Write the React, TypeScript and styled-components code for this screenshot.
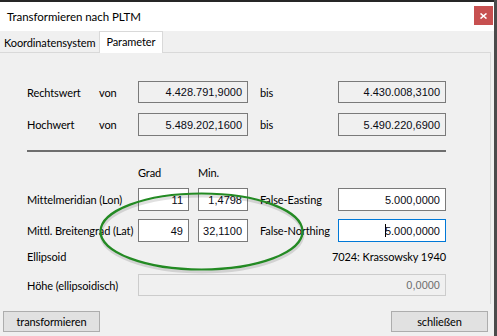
import React from 'react';
import styled, { createGlobalStyle } from 'styled-components';

const GlobalStyle = createGlobalStyle`
  html, body {
    margin: 0;
    padding: 0;
    background: #f0f0f0;
  }
  * {
    box-sizing: border-box;
  }
`;

const UI_FONT = `Lato, 'Noto Sans', sans-serif`;
const FIELD_FONT = `'Liberation Sans', Arial, sans-serif`;
const COLS = '72px 39px 51px 9px 50px 12px 78px 108px';

// Layout
const Screen = styled.div`
  display: flex;
  width: 497px;
  height: 336px;
  overflow: hidden;
  position: relative;
  font-family: ${UI_FONT};
  font-size: 11px;
  letter-spacing: -0.1px;
  color: #000;
`;

const Window = styled.div`
  flex: 1;
  display: flex;
  flex-direction: column;
  border-top: 2px solid #262626;
  background: #f0f0f0;
`;

const RightEdge = styled.div`
  width: 3px;
  background: #4b4b4b;
`;

const TitleBar = styled.div`
  height: 29px;
  display: flex;
  align-items: center;
  justify-content: space-between;
  padding: 0 1px 0 7px;
  background: #fff;
  font-size: 11.5px;
  letter-spacing: -0.05px;
`;

const CloseButton = styled.div`
  width: 19px;
  height: 19px;
  background: #c75050;
  display: flex;
  align-items: center;
  justify-content: center;
  margin-top: -2px;
`;

const TabStrip = styled.div`
  height: 21px;
  display: flex;
  align-items: flex-end;
  position: relative;
  z-index: 1;
`;

const Tab = styled.div<{ $active?: boolean }>`
  display: flex;
  align-items: center;
  white-space: nowrap;
  ${({ $active }) =>
    $active
      ? `
        height: 22px;
        margin-bottom: -1px;
        padding: 0 7px 3px 6px;
        background: #fff;
        border: 1px solid #d9d9d9;
        border-bottom: none;
      `
      : `
        height: 19px;
        padding: 0 4px;
      `}
`;

const Panel = styled.div`
  height: 252px;
  margin-right: 3px;
  border-top: 1px solid #d9d9d9;
  border-right: 1px solid #d9d9d9;
  padding-left: 27px;
  display: flex;
  flex-direction: column;
`;

const Row = styled.div<{ $h: number; $mt: number }>`
  display: grid;
  grid-template-columns: ${COLS};
  align-items: center;
  height: ${({ $h }) => $h}px;
  margin-top: ${({ $mt }) => $mt}px;
`;

const Label = styled.span<{ $span?: string }>`
  grid-column: ${({ $span }) => $span || 'auto'};
  white-space: nowrap;
`;

const Field = styled.div<{ $span: string; $kind?: 'readonly' | 'edit' | 'focus' | 'disabled' }>`
  grid-column: ${({ $span }) => $span};
  height: 100%;
  display: flex;
  align-items: center;
  justify-content: flex-end;
  padding-right: 5px;
  font-family: ${FIELD_FONT};
  font-size: 11px;
  letter-spacing: 0;
  color: #0a0a14;
  position: relative;
  ${({ $kind }) => {
    switch ($kind) {
      case 'readonly':
        return `background: #f0f0f0; border: 1px solid #7a7a7a;`;
      case 'focus':
        return `background: #fff; border: 1px solid #0078d7;`;
      case 'disabled':
        return `background: #f0f0f0; border: 1px solid #cccccc; color: #6d6d6d;`;
      default:
        return `background: #fff; border: 1px solid #7a7a7a;`;
    }
  }}
`;

const Caret = styled.span`
  display: inline-block;
  width: 1px;
  height: 13px;
  background: #000;
  margin-right: -1px;
`;

const Separator = styled.div`
  width: 419px;
  height: 2px;
  margin-top: 14px;
  background: #6e6e6e;
`;

const Value = styled.span<{ $span: string }>`
  grid-column: ${({ $span }) => $span};
  text-align: right;
  white-space: nowrap;
`;

const Footer = styled.div`
  flex: 1;
  display: flex;
  justify-content: space-between;
  align-items: flex-start;
  padding: 7px 6px 0 3px;
`;

const Button = styled.div`
  width: 97px;
  height: 21px;
  display: flex;
  align-items: center;
  justify-content: center;
  background: #e1e1e1;
  border: 1px solid #adadad;
`;

const Annotation = styled.svg`
  position: absolute;
  left: 0;
  top: 0;
  pointer-events: none;
`;

const App = () => {
  return (
    <>
      <GlobalStyle />
      <Screen>
        <Window>
          <TitleBar>
            <span>Transformieren nach PLTM</span>
            <CloseButton>
              <svg width='7' height='6' viewBox='0 0 7 6'>
                <path d='M0.5 0.5 L6.5 5.5 M6.5 0.5 L0.5 5.5' stroke='#fff' strokeWidth='1.6' />
              </svg>
            </CloseButton>
          </TitleBar>

          <TabStrip>
            <Tab>Koordinatensystem</Tab>
            <Tab $active>Parameter</Tab>
          </TabStrip>

          <Panel>
            <Row $h={22} $mt={28}>
              <Label>Rechtswert</Label>
              <Label>von</Label>
              <Field $span='3 / 6' $kind='readonly'>4.428.791,9000</Field>
              <Label $span='7'>bis</Label>
              <Field $span='8' $kind='readonly'>4.430.008,3100</Field>
            </Row>
            <Row $h={23} $mt={10}>
              <Label>Hochwert</Label>
              <Label>von</Label>
              <Field $span='3 / 6' $kind='readonly'>5.489.202,1600</Field>
              <Label $span='7'>bis</Label>
              <Field $span='8' $kind='readonly'>5.490.220,6900</Field>
            </Row>

            <Separator />

            <Row $h={16} $mt={12}>
              <Label $span='3'>Grad</Label>
              <Label $span='5'>Min.</Label>
            </Row>
            <Row $h={23} $mt={8}>
              <Label $span='1 / 3'>Mittelmeridian (Lon)</Label>
              <Field $span='3'>11</Field>
              <Field $span='5'>1,4798</Field>
              <Label $span='7'>False-Easting</Label>
              <Field $span='8'>5.000,0000</Field>
            </Row>
            <Row $h={23} $mt={8}>
              <Label $span='1 / 3'>Mittl. Breitengrad (Lat)</Label>
              <Field $span='3'>49</Field>
              <Field $span='5'>32,1100</Field>
              <Label $span='7'>False-Northing</Label>
              <Field $span='8' $kind='focus'>
                <Caret />
                5.000,0000
              </Field>
            </Row>
            <Row $h={16} $mt={6}>
              <Label $span='1 / 3'>Ellipsoid</Label>
              <Value $span='3 / 9'>7024: Krassowsky 1940</Value>
            </Row>
            <Row $h={22} $mt={10}>
              <Label $span='1 / 3'>Höhe (ellipsoidisch)</Label>
              <Field $span='3 / 9' $kind='disabled'>0,0000</Field>
            </Row>
          </Panel>

          <Footer>
            <Button>transformieren</Button>
            <Button>schließen</Button>
          </Footer>
        </Window>
        <RightEdge />

        <Annotation width='497' height='336'>
          <ellipse cx='202' cy='234' rx='101' ry='38' fill='none' stroke='rgba(0,0,0,0.12)' strokeWidth='3' />
          <ellipse cx='201.5' cy='231.5' rx='101' ry='38' fill='none' stroke='#238a23' strokeWidth='2.2' />
        </Annotation>
      </Screen>
    </>
  );
};

export default App;
